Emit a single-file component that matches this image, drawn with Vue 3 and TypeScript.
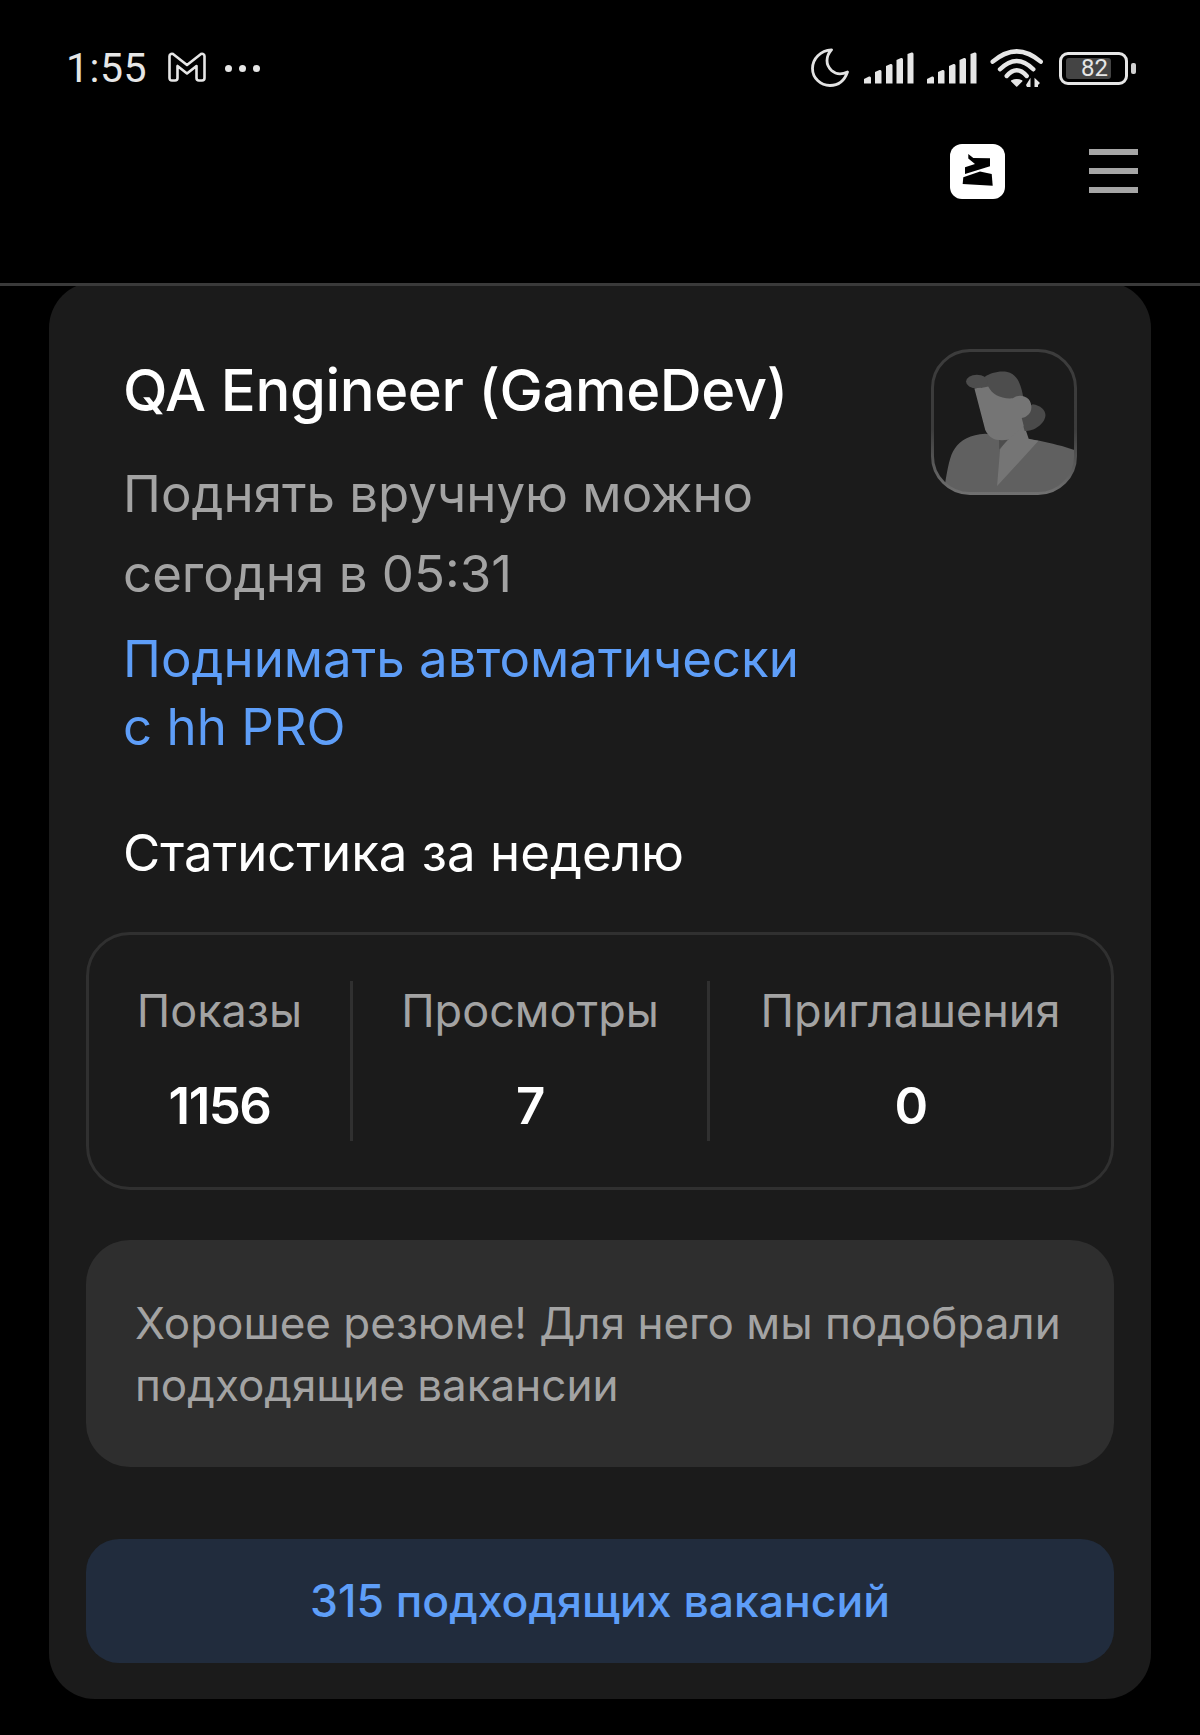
<script setup lang="ts">
const stats = [
  { label: 'Показы', value: '1156', cls: 'c1' },
  { label: 'Просмотры', value: '7', cls: 'c2' },
  { label: 'Приглашения', value: '0', cls: 'c3' },
]
</script>

<template>
  <div class="page">
    <header class="top">
      <div class="status">
        <div class="left">
          <span class="time">1:55</span>
          <svg class="gm" width="38" height="30" viewBox="0 0 38 30" fill="none" stroke="#e6e6e6" stroke-width="2.6" stroke-linejoin="round">
            <path d="M3 2 Q4 1.5 5 2 L19 13 L33 2 Q34 1.5 35 2 Q36.5 2.5 36.5 4 V26 Q36.5 28.5 34 28.5 H31 Q28.5 28.5 28.5 26 V14 L19 21.5 L9.5 14 V26 Q9.5 28.5 7 28.5 H4 Q1.5 28.5 1.5 26 V4 Q1.5 2.5 3 2 Z" />
          </svg>
          <span class="dots"><i></i><i></i><i></i></span>
        </div>
        <div class="right">
          <svg class="moon" width="38" height="39" viewBox="0 0 38 39" fill="none" stroke="#e2e2e2" stroke-width="2.8" stroke-linejoin="round">
            <path d="M20.5 1.8 C9.5 2.5 1.5 10.5 1.5 20.5 C1.5 30 9.5 37.5 19 37.5 C27.5 37.500 33.5 32.5 36.5 24 C31 26.5 25 26.5 20.5 22.5 C14.5 17 14.5 8.5 20.5 1.8 Z" />
          </svg>
          <svg class="sig" width="50" height="32" viewBox="0 0 50 32" fill="#e6e6e6">
            <path d="M0 27 L5 24.5 Q7 24 7 26 V31.5 H0 Z" />
            <path d="M11 20 L15.5 18 Q17.5 17.5 17.5 19.5 V31.5 H11 Z" />
            <path d="M22 14 L26.5 12 Q28.5 11.5 28.5 13.5 V31.5 H22 Z" />
            <path d="M32.5 8 L37 6 Q39 5.5 39 7.5 V31.5 H32.5 Z" />
            <path d="M43.5 2 L47.5 0.5 Q49.5 0 49.5 2 V31.5 H43.5 Z" />
          </svg>
          <svg class="sig" width="50" height="32" viewBox="0 0 50 32" fill="#e6e6e6">
            <path d="M0 27 L5 24.5 Q7 24 7 26 V31.5 H0 Z" />
            <path d="M11 20 L15.5 18 Q17.5 17.5 17.5 19.5 V31.5 H11 Z" />
            <path d="M22 14 L26.5 12 Q28.5 11.5 28.5 13.5 V31.5 H22 Z" />
            <path d="M32.5 8 L37 6 Q39 5.5 39 7.5 V31.5 H32.5 Z" />
            <path d="M43.5 2 L47.5 0.5 Q49.5 0 49.5 2 V31.5 H43.5 Z" />
          </svg>
          <svg class="wifi" width="54" height="40" viewBox="0 0 54 40" fill="none" stroke="#e6e6e6" stroke-width="4.4" stroke-linecap="round">
            <path d="M2.7 12.7 Q26.7 -8 50.7 12.7" />
            <path d="M10 20.3 Q26.7 3.7 43.3 20.3" />
            <path d="M16.7 27 Q26.7 15.6 36.7 27" />
            <path d="M21.7 32 Q26.7 29.5 31.7 32 L26.7 37 Z" fill="#e6e6e6" stroke="#e6e6e6" stroke-width="1.5" stroke-linejoin="round" />
            <path d="M40.5 28.7 V38 H37 L36 36 Z M44.5 28.7 L50 34 L48 36 V38 H44.5 Z" fill="#e6e6e6" stroke="none" />
          </svg>
          <div class="batt">
            <div class="batt-body"><span class="batt-fill">82</span></div>
            <span class="batt-tip"></span>
          </div>
        </div>
      </div>
      <div class="nav">
        <div class="logo">
          <svg width="55" height="55" viewBox="0 0 55 55" fill="#000">
            <path d="M18.3 10 L23.300 14 L40 14.3 L40 22.3 L15 30 L15 23.3 L25 20 L18.3 14.500 Z" />
            <path d="M13.3 33.3 L30 27.500 L41.7 30 L42.7 41.7 L12.7 40 Z" />
          </svg>
        </div>
        <div class="burger"><i></i><i></i><i></i></div>
      </div>
    </header>

    <main class="main">
      <section class="card">
        <div class="head">
          <div class="head-text">
            <h1 class="title">QA Engineer (GameDev)</h1>
            <p class="sub">Поднять вручную можно<br />сегодня в 05:31</p>
            <a class="link">Поднимать автоматически<br />с hh PRO</a>
          </div>
          <svg class="avatar" width="146" height="146" viewBox="0 0 148 148">
            <defs>
              <clipPath id="av"><rect x="1.5" y="1.5" width="145" height="145" rx="38" /></clipPath>
              <linearGradient id="fr" x1="0" y1="0" x2="0" y2="1">
                <stop offset="0" stop-color="#3c3c3c" />
                <stop offset="0.55" stop-color="#3c3c3c" />
                <stop offset="1" stop-color="#707070" />
              </linearGradient>
            </defs>
            <g clip-path="url(#av)">
              <path d="M14 138 C17 120 19 108 24 101 C30 92 40 87 55 86 L110 93 C122 96 134 98 147 103 V150 H10 Z" fill="#606060" />
              <path d="M67 139 L70 102 L92 70 L99 91 L109 93 Z" fill="#757575" />
              <path d="M69 102 L69 92 L79 91 Z" fill="#4d4d4d" />
              <path d="M103 56 C111 57 116 62 116 67 C116 75 105 84 95 83 L90 66 Z" fill="#4a4a4a" />
              <path d="M55 28 C60 24 72 21 80 24 C88 27 92 38 94 52 L60 52 L50 36 Z" fill="#4d4d4d" />
              <ellipse cx="46.5" cy="33" rx="11" ry="7" fill="#4d4d4d" />
              <path d="M44 40 C48 39.5 54 39 58 38 C62 46 71 51 83 50 C88 46 95 47 99 51 C103 56 103 64 97 68 C95 69.500 93 70 92 70 L94 78 L78 92 C74 92.500 70 92.500 66 92 C60 90 57 86 55 82 Z" fill="#757575" />
            </g>
            <rect x="1.5" y="1.5" width="145" height="145" rx="38" fill="none" stroke="url(#fr)" stroke-width="3" />
          </svg>
        </div>

        <h2 class="stats-title">Статистика за неделю</h2>

        <div class="stats">
          <div v-for="s in stats" :key="s.label" class="stat" :class="s.cls">
            <div class="stat-label">{{ s.label }}</div>
            <div class="stat-value">{{ s.value }}</div>
          </div>
        </div>

        <div class="note">Хорошее резюме! Для него мы подобрали<br />подходящие вакансии</div>

        <button class="cta">315 подходящих вакансий</button>
      </section>
    </main>
  </div>
</template>

<style>
html, body { margin: 0; background: #000; }
</style>

<style scoped>
.page {
  width: 1200px;
  height: 1735px;
  overflow: hidden;
  background: #000;
  font-family: Inter, "Noto Sans", sans-serif;
  color: #fff;
}
.top {
  position: relative;
  z-index: 2;
  height: 283px;
  background: #000;
  border-bottom: 3px solid #3a3a3a;
}
.status {
  height: 136px;
  padding: 0 64px 0 66px;
  display: flex;
  justify-content: space-between;
  align-items: center;
  box-sizing: border-box;
}
.left { display: flex; align-items: center; }
.time {
  font-family: Roboto, sans-serif;
  font-size: 41px;
  font-weight: 400;
  color: #e6e6e6;
  letter-spacing: 0.5px;
}
.gm { margin-left: 21px; margin-top: -3px; }
.dots { display: flex; gap: 7px; margin-left: 19px; }
.dots i { width: 7px; height: 7px; border-radius: 50%; background: #e6e6e6; display: block; }
.right { display: flex; align-items: center; }
.moon { margin-right: 15px; margin-top: -2px; }
.sig { margin-right: 13px; }
.wifi { margin-right: 15px; margin-top: 2px; }
.batt { display: flex; align-items: center; gap: 3px; }
.batt-body {
  width: 69px;
  height: 33px;
  border: 3px solid #e6e6e6;
  border-radius: 9px;
  box-sizing: border-box;
  padding: 3px 4px;
  display: flex;
}
.batt-fill {
  width: 45px;
  background: #444;
  border-radius: 3px;
  font-family: Roboto, sans-serif;
  font-size: 24px;
  line-height: 21px;
  color: #e6e6e6;
  text-align: right;
  padding-right: 3px;
  box-sizing: border-box;
}
.batt-tip { width: 5px; height: 11px; border-radius: 2px; background: #d0d0d0; }
.nav {
  display: flex;
  justify-content: flex-end;
  align-items: center;
  height: 70px;
  padding-right: 62px;
}
.logo {
  width: 55px;
  height: 55px;
  background: #fff;
  border-radius: 12px;
  margin-right: 84px;
}
.logo svg { display: block; }
.burger { width: 49px; display: flex; flex-direction: column; gap: 13px; }
.burger i { height: 6px; background: #a6a6a6; display: block; }
.main { padding: 0 49px; margin-top: -4px; }
.card {
  background: #1b1b1b;
  border-radius: 46px;
  height: 1417px;
  box-sizing: border-box;
  padding: 68px 37px 37px;
}
.head {
  display: flex;
  justify-content: space-between;
  padding: 0 37px;
}
.title {
  margin: 10px 0 0;
  font-size: 58px;
  font-weight: 500;
  letter-spacing: -0.4px;
  line-height: 60px;
  color: #fff;
}
.sub {
  margin: 34px 0 0;
  font-size: 51px;
  line-height: 80px;
  font-weight: 400;
  color: #a3a3a3;
}
.link {
  display: block;
  margin-top: 11px;
  font-size: 51px;
  line-height: 68px;
  color: #5e9ef8;
}
.avatar { flex: none; margin-top: -1px; }
.stats-title {
  margin: 62px 0 0 37px;
  font-size: 51px;
  font-weight: 400;
  line-height: 60px;
  color: #fff;
}
.stats {
  margin-top: 49px;
  height: 258px;
  box-sizing: border-box;
  border: 3px solid #303030;
  border-radius: 44px;
  display: flex;
  padding: 46px 0;
}
.stat { text-align: center; }
.c1 { width: 264px; border-right: 3px solid #303030; box-sizing: border-box; }
.c2 { width: 357px; border-right: 3px solid #303030; box-sizing: border-box; }
.c3 { flex: 1; }
.stat-label { font-size: 45px; line-height: 60px; color: #a3a3a3; }
.stat-value { font-size: 51px; font-weight: 600; letter-spacing: -1.5px; line-height: 60px; margin-top: 35px; color: #fff; }
.note {
  margin-top: 50px;
  height: 227px;
  box-sizing: border-box;
  background: #2e2e2e;
  border-radius: 44px;
  padding: 52px 49px;
  font-size: 44px;
  line-height: 62px;
  color: #a3a3a3;
}
.cta {
  display: block;
  width: 100%;
  margin-top: 72px;
  height: 124px;
  border: 0;
  border-radius: 33px;
  background: #212c3d;
  font-family: inherit;
  font-size: 44.5px;
  font-weight: 500;
  color: #5e9ef8;
}
</style>
